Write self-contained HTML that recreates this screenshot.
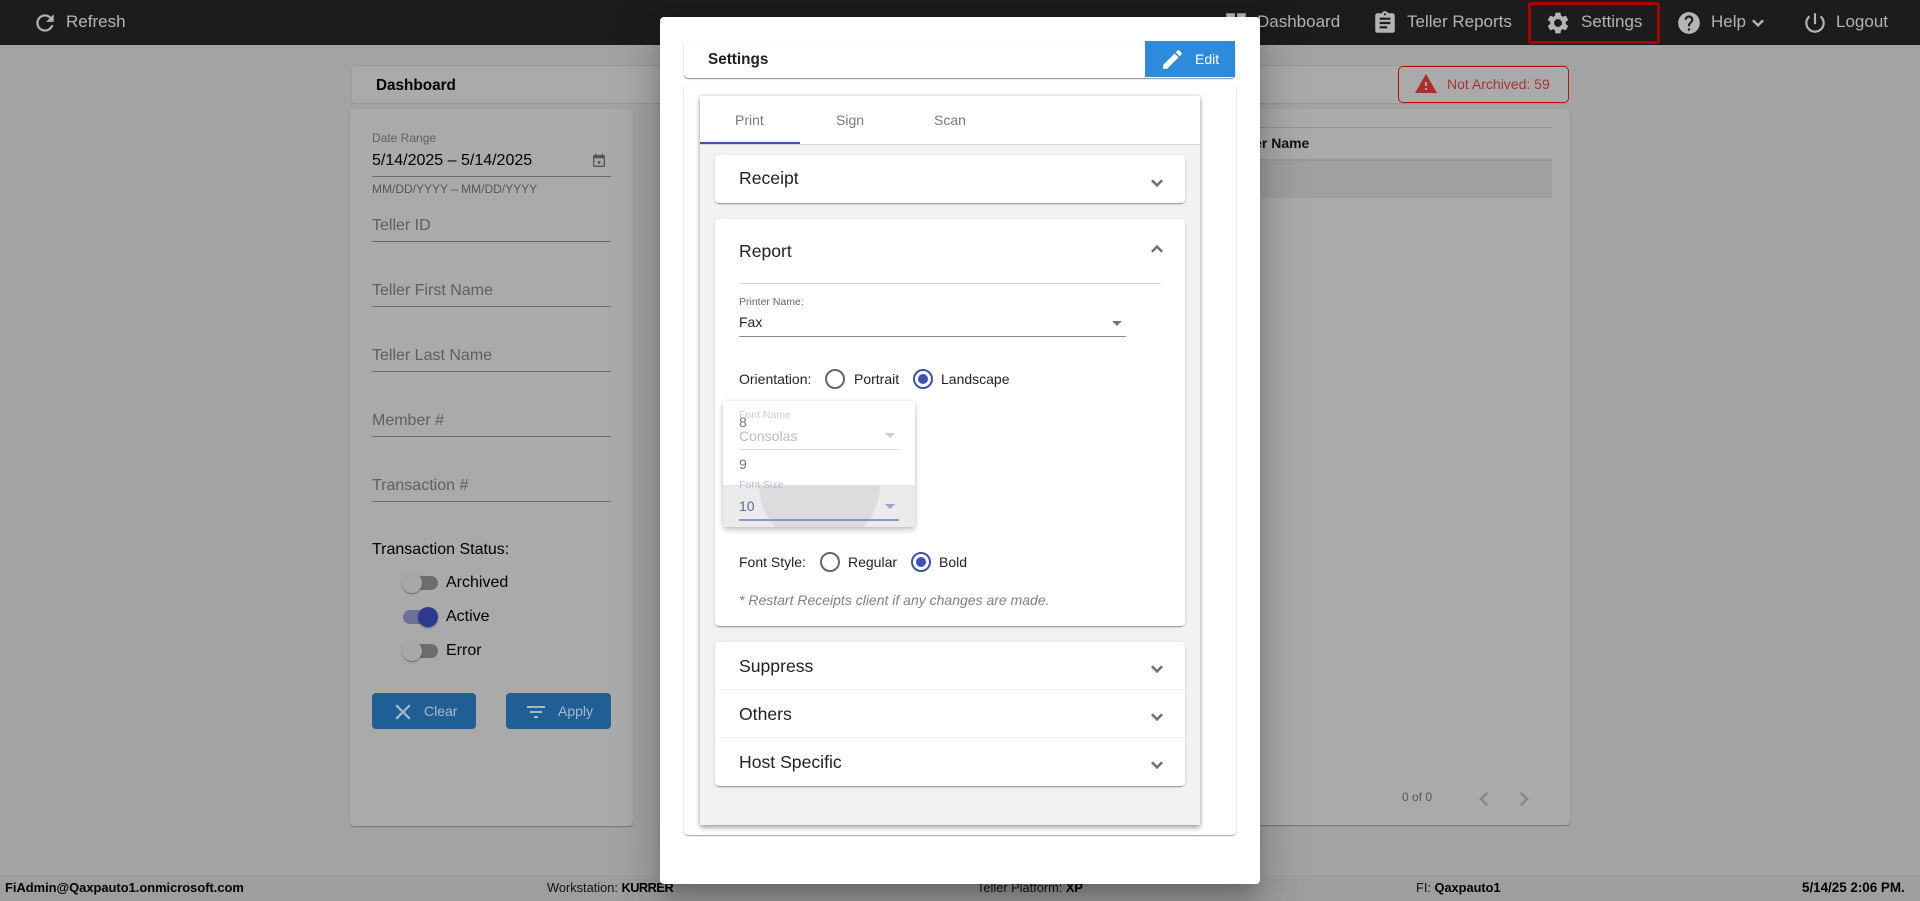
<!DOCTYPE html>
<html lang="en"><head><meta charset="utf-8"><title>Settings</title>
<style>
html,body{margin:0;padding:0;width:1920px;height:901px;overflow:hidden;background:#a3a3a3;font-family:"Liberation Sans",Arial,sans-serif}
.a,.t,svg{position:absolute}
.t{white-space:nowrap;line-height:20px}
svg{display:block}
.line{position:absolute;height:1px;background:#6b6b6b;left:372px;width:239px}
.ph{color:#5f5f5f;font-size:16px;left:372px}
.nav{color:#b4b4b4;font-size:17px}
.track{position:absolute;left:403px;width:35px;height:14px;border-radius:7px;background:#6d6d6d}
.thumb{position:absolute;width:20px;height:20px;border-radius:50%;background:#a8a8a8;box-shadow:0 2px 1px -1px rgba(0,0,0,.2),0 1px 1px rgba(0,0,0,.14),0 1px 3px rgba(0,0,0,.12)}
.lab{font-size:16px;color:#000;left:446px}
.btn{position:absolute;top:693px;height:36px;background:#1f5f96;border-radius:4px;width:104px}
.radio{position:absolute;width:16px;height:16px;border:2px solid #666;border-radius:50%}
.radio.on{border-color:#3f51b5}
.radio.on:after{content:"";position:absolute;left:3px;top:3px;width:10px;height:10px;border-radius:50%;background:#3f51b5}
.s14{font-size:14px;color:#222}
.h{font-size:17.6px;color:#212121;left:739px}
.panel{position:absolute;left:715px;width:470px;background:#fff;border-radius:4px;box-shadow:0 2px 1px -1px rgba(0,0,0,.2),0 1px 1px rgba(0,0,0,.14),0 1px 3px rgba(0,0,0,.12)}
.arrow{position:absolute;width:0;height:0;border-left:5px solid transparent;border-right:5px solid transparent;border-top:5px solid #757575}
.chev{fill:#6e6e6e;stroke:#6e6e6e;stroke-width:.7}
</style></head>
<body>
<!-- header -->
<div class="a" style="left:0;top:0;width:1920px;height:45px;background:#1c1c1c"></div>
<svg style="left:31.5px;top:10px" width="26" height="26" viewBox="0 0 24 24" fill="#b4b4b4"><path d="M17.65 6.35C16.2 4.9 14.21 4 12 4c-4.42 0-7.99 3.58-7.99 8s3.57 8 7.99 8c3.73 0 6.84-2.55 7.73-6h-2.08c-.82 2.33-3.04 4-5.65 4-3.31 0-6-2.69-6-6s2.69-6 6-6c1.66 0 3.14.69 4.22 1.78L13 11h7V4l-2.35 2.35z"/></svg>
<div class="t nav" style="left:66px;top:12px">Refresh</div>
<svg style="left:1222.5px;top:10px" width="26" height="26" viewBox="0 0 24 24" fill="#b4b4b4"><path d="M3 13h8V3H3v10zm0 8h8v-6H3v6zm10 0h8V11h-8v10zm0-18v6h8V3h-8z"/></svg>
<div class="t nav" style="left:1257px;top:12px">Dashboard</div>
<svg style="left:1371.5px;top:10px" width="26" height="26" viewBox="0 0 24 24" fill="#b4b4b4"><path d="M19 3h-4.18C14.4 1.84 13.3 1 12 1c-1.3 0-2.4.84-2.82 2H5c-1.1 0-2 .9-2 2v14c0 1.1.9 2 2 2h14c1.1 0 2-.9 2-2V5c0-1.1-.9-2-2-2zm-7 0c.55 0 1 .45 1 1s-.45 1-1 1-1-.45-1-1 .45-1 1-1zm2 14H7v-2h7v2zm3-4H7v-2h10v2zm0-4H7V7h10v2z"/></svg>
<div class="t nav" style="left:1407px;top:12px">Teller Reports</div>
<div class="a" style="left:1528px;top:2px;width:126px;height:36px;border:3px solid #a80000;border-radius:3px"></div>
<svg style="left:1545px;top:10px" width="26" height="26" viewBox="0 0 24 24" fill="#b4b4b4"><path d="M19.14 12.94c.04-.3.06-.61.06-.94 0-.32-.02-.64-.07-.94l2.03-1.58c.18-.14.23-.41.12-.61l-1.92-3.32c-.12-.22-.37-.29-.59-.22l-2.39.96c-.5-.38-1.03-.7-1.62-.94l-.36-2.54c-.04-.24-.24-.41-.48-.41h-3.84c-.24 0-.43.17-.47.41l-.36 2.54c-.59.24-1.13.57-1.62.94l-2.39-.96c-.22-.08-.47 0-.59.22L2.74 8.87c-.12.21-.08.47.12.61l2.03 1.58c-.05.3-.09.63-.09.94s.02.64.07.94l-2.03 1.58c-.18.14-.23.41-.12.61l1.92 3.32c.12.22.37.29.59.22l2.39-.96c.5.38 1.03.7 1.62.94l.36 2.54c.05.24.24.41.48.41h3.84c.24 0 .44-.17.47-.41l.36-2.54c.59-.24 1.13-.56 1.62-.94l2.39.96c.22.08.47 0 .59-.22l1.92-3.32c.12-.22.07-.47-.12-.61l-2.01-1.58zM12 15.6c-1.98 0-3.6-1.62-3.6-3.6s1.62-3.6 3.6-3.6 3.6 1.62 3.6 3.6-1.62 3.6-3.6 3.6z"/></svg>
<div class="t nav" style="left:1581px;top:12px">Settings</div>
<svg style="left:1676px;top:10px" width="26" height="26" viewBox="0 0 24 24" fill="#b4b4b4"><path d="M12 2C6.48 2 2 6.48 2 12s4.48 10 10 10 10-4.48 10-10S17.52 2 12 2zm1 17h-2v-2h2v2zm2.07-7.75l-.9.92C13.45 12.9 13 13.5 13 15h-2v-.5c0-1.1.45-2.1 1.17-2.83l1.24-1.26c.37-.36.59-.86.59-1.41 0-1.1-.9-2-2-2s-2 .9-2 2H8c0-2.21 1.79-4 4-4s4 1.79 4 4c0 .88-.36 1.68-.93 2.25z"/></svg>
<div class="t nav" style="left:1711px;top:12px">Help</div>
<svg style="left:1747px;top:12px" width="22" height="22" viewBox="0 0 24 24" fill="#b4b4b4" stroke="#b4b4b4" stroke-width=".7"><path d="M16.59 8.59L12 13.17 7.41 8.59 6 10l6 6 6-6z"/></svg>
<svg style="left:1802px;top:10px" width="26" height="26" viewBox="0 0 24 24" fill="#b4b4b4"><path d="M13 3h-2v10h2V3zm4.83 2.17l-1.42 1.42C17.99 7.86 19 9.81 19 12c0 3.87-3.13 7-7 7s-7-3.13-7-7c0-2.19 1.01-4.14 2.58-5.42L6.17 5.17C4.23 6.82 3 9.26 3 12c0 4.97 4.03 9 9 9s9-4.03 9-9c0-2.74-1.23-5.18-3.17-6.83z"/></svg>
<div class="t nav" style="left:1836px;top:12px">Logout</div>

<!-- dashboard bar -->
<div class="a" style="left:351px;top:65px;width:1218px;height:37px;background:#aaa;border-top:1px solid #989898;border-bottom:1px solid #989898;border-left:1px solid #9c9c9c;border-radius:4px"></div>
<div class="t" style="left:376px;top:76px;font-size:15.3px;font-weight:bold;color:#000">Dashboard</div>
<div class="a" style="left:1398px;top:66px;width:169px;height:35px;border:1px solid #b80d0d;border-radius:5px;background:#aaa"></div>
<svg style="left:1414px;top:72px" width="24" height="24" viewBox="0 0 24 24" fill="#ad2d2a"><path d="M1 21h22L12 2 1 21zm12-3h-2v-2h2v2zm0-4h-2v-4h2v4z"/></svg>
<div class="t" style="left:1447px;top:74px;font-size:14px;color:#a83232">Not Archived: 59</div>

<!-- left panel -->
<div class="a" style="left:350px;top:109px;width:283px;height:717px;background:#aaa;border-radius:4px;box-shadow:0 1px 1px rgba(0,0,0,.3)"></div>
<div class="t" style="left:372px;top:128px;font-size:12px;color:#616161">Date Range</div>
<div class="t" style="left:372px;top:151px;font-size:16px;color:#000">5/14/2025 – 5/14/2025</div>
<svg style="left:591px;top:152.5px" width="16" height="16" viewBox="0 0 24 24" fill="#555"><path d="M19 3h-1V1h-2v2H8V1H6v2H5c-1.11 0-1.99.9-1.99 2L3 19c0 1.1.89 2 2 2h14c1.1 0 2-.9 2-2V5c0-1.1-.9-2-2-2zm0 16H5V8h14v11zM10 12h4v4h-4z"/></svg>
<div class="line" style="top:176px"></div>
<div class="t" style="left:372px;top:179px;font-size:12px;color:#555">MM/DD/YYYY – MM/DD/YYYY</div>
<div class="t ph" style="top:216px">Teller ID</div><div class="line" style="top:241px"></div>
<div class="t ph" style="top:281px">Teller First Name</div><div class="line" style="top:306px"></div>
<div class="t ph" style="top:346px">Teller Last Name</div><div class="line" style="top:371px"></div>
<div class="t ph" style="top:411px">Member #</div><div class="line" style="top:436px"></div>
<div class="t ph" style="top:476px">Transaction #</div><div class="line" style="top:501px"></div>
<div class="t" style="left:372px;top:540px;font-size:16px;color:#000">Transaction Status:</div>
<div class="track" style="top:576px"></div><div class="thumb" style="left:402px;top:573px"></div>
<div class="t lab" style="top:573px">Archived</div>
<div class="track" style="top:610px;background:#6c7199"></div><div class="thumb" style="left:418px;top:607px;background:#2c3a8c"></div>
<div class="t lab" style="top:607px">Active</div>
<div class="track" style="top:644px"></div><div class="thumb" style="left:402px;top:641px"></div>
<div class="t lab" style="top:641px">Error</div>
<div class="btn" style="left:372px"></div>
<svg style="left:389.5px;top:699px" width="26" height="26" viewBox="0 0 24 24" fill="#a9bac8"><path d="M19 6.41L17.59 5 12 10.59 6.41 5 5 6.41 10.59 12 5 17.59 6.41 19 12 13.41 17.59 19 19 17.59 13.41 12z"/></svg>
<div class="t" style="left:424px;top:701px;font-size:14px;color:#a9bac8">Clear</div>
<div class="btn" style="left:506px;width:105px"></div>
<svg style="left:524px;top:700px" width="24" height="24" viewBox="0 0 24 24" fill="#a9bac8"><path d="M10 18h4v-2h-4v2zM3 6v2h18V6H3zm3 7h12v-2H6v2z"/></svg>
<div class="t" style="left:558px;top:701px;font-size:14px;color:#a9bac8">Apply</div>

<!-- right panel -->
<div class="a" style="left:660px;top:109px;width:910px;height:716px;background:#aaa;border-radius:4px;box-shadow:0 1px 1px rgba(0,0,0,.3)"></div>
<div class="a" style="left:660px;top:127px;width:892px;height:1px;background:#939393"></div>
<div class="t" style="left:1231px;top:133px;font-size:14px;font-weight:bold;color:#111">Teller Name</div>
<div class="a" style="left:660px;top:159px;width:892px;height:2px;background:#969aa0"></div>
<div class="a" style="left:660px;top:161px;width:892px;height:37px;background:#a0a0a0"></div>
<div class="t" style="left:1402px;top:787px;font-size:12px;color:#555">0 of 0</div>
<svg style="left:1470px;top:785px" width="28" height="28" viewBox="0 0 24 24" fill="#868686"><path d="M15.41 7.41L14 6l-6 6 6 6 1.41-1.41L10.83 12z"/></svg>
<svg style="left:1510px;top:785px" width="28" height="28" viewBox="0 0 24 24" fill="#868686"><path d="M10 6L8.59 7.41 13.17 12l-4.58 4.59L10 18l6-6z"/></svg>

<!-- footer -->
<div class="a" style="left:0;top:875px;width:1920px;height:26px;background:#9d9e9f"></div>
<div class="t" style="left:5px;top:878px;font-size:12.9px;font-weight:bold;color:#000">FiAdmin@Qaxpauto1.onmicrosoft.com</div>
<div class="t" style="left:547px;top:878px;font-size:12.8px;color:#111">Workstation: <b style="color:#000;letter-spacing:-.5px">KURRER</b></div>
<div class="t" style="left:977px;top:878px;font-size:12.8px;color:#111">Teller Platform: <b style="color:#000">XP</b></div>
<div class="t" style="left:1416px;top:878px;font-size:12.8px;color:#111">FI: <b style="color:#000">Qaxpauto1</b></div>
<div class="t" style="left:1802px;top:878px;font-size:13.4px;font-weight:bold;color:#000">5/14/25 2:06 PM.</div>

<!-- modal -->
<div class="a" style="left:660px;top:17px;width:600px;height:867px;background:#fff;border-radius:4px;box-shadow:0 11px 15px -7px rgba(0,0,0,.2),0 24px 38px 3px rgba(0,0,0,.14),0 9px 46px 8px rgba(0,0,0,.12)"></div>
<div class="a" style="left:684px;top:41px;width:551px;height:37px;background:#fff;border-radius:4px;box-shadow:0 1px 1px rgba(0,0,0,.45),0 0 2px rgba(0,0,0,.06)"></div>
<div class="t" style="left:708px;top:50px;font-size:15.3px;font-weight:bold;color:#212121">Settings</div>
<div class="a" style="left:1145px;top:41px;width:90px;height:36px;background:#2e8bdc"></div>
<svg style="left:1160px;top:47px" width="25" height="25" viewBox="0 0 24 24" fill="#fff"><path d="M3 17.25V21h3.75L17.81 9.94l-3.75-3.75L3 17.25zM20.71 7.04c.39-.39.39-1.02 0-1.41l-2.34-2.34c-.39-.39-1.02-.39-1.41 0l-1.83 1.83 3.75 3.75 1.83-1.83z"/></svg>
<div class="t" style="left:1195px;top:49px;font-size:14px;color:#fff">Edit</div>

<div class="a" style="left:684px;top:86px;width:552px;height:749px;background:#fff;border-radius:4px;box-shadow:0 1px 1px rgba(0,0,0,.35),0 0 2px rgba(0,0,0,.08)"></div>
<div class="a" style="left:700px;top:96px;width:500px;height:729px;background:#f2f2f2;box-shadow:0 3px 5px rgba(0,0,0,.3),0 0 4px rgba(0,0,0,.18)"></div>
<div class="a" style="left:700px;top:96px;width:500px;height:48px;background:#fff;border-bottom:1px solid #d8d8d8"></div>
<div class="a" style="left:700px;top:142px;width:100px;height:2px;background:#3f51b5"></div>
<div class="t" style="left:735px;top:110px;font-size:14px;color:#7a7a7a">Print</div>
<div class="t" style="left:836px;top:110px;font-size:14px;color:#7a7a7a">Sign</div>
<div class="t" style="left:934px;top:110px;font-size:14px;color:#7a7a7a">Scan</div>

<div class="panel" style="top:155px;height:48px"></div>
<div class="t h" style="top:168px">Receipt</div>
<svg class="chev" style="left:1146px;top:172px" width="22" height="22" viewBox="0 0 24 24"><path d="M16.59 8.59L12 13.17 7.41 8.59 6 10l6 6 6-6z"/></svg>

<div class="panel" style="top:219px;height:407px"></div>
<div class="t h" style="top:241px">Report</div>
<svg class="chev" style="left:1146px;top:238px" width="22" height="22" viewBox="0 0 24 24"><path d="M12 8l-6 6 1.41 1.41L12 10.83l4.59 4.58L18 14z"/></svg>
<div class="a" style="left:739px;top:283px;width:422px;height:1px;background:#dcdcdc"></div>
<div class="t" style="left:739px;top:292px;font-size:10.5px;color:#666">Printer Name:</div>
<div class="t s14" style="left:739px;top:312px">Fax</div>
<div class="arrow" style="left:1112px;top:321px"></div>
<div class="a" style="left:739px;top:336px;width:387px;height:1px;background:#8a8a8a"></div>

<div class="t s14" style="left:739px;top:369px">Orientation:</div>
<div class="radio" style="left:825px;top:369px"></div>
<div class="t s14" style="left:854px;top:369px">Portrait</div>
<div class="radio on" style="left:913px;top:369px"></div>
<div class="t s14" style="left:941px;top:369px">Landscape</div>

<div class="a" style="left:723px;top:401px;width:192px;height:126px;background:#fff;box-shadow:0 3px 6px rgba(0,0,0,.22),0 0 3px rgba(0,0,0,.1);border-radius:3px;overflow:hidden">
  <div class="a" style="left:0;top:84px;width:192px;height:42px;background:#ebebeb"></div>
  <div class="a" style="left:36px;top:24px;width:121px;height:121px;border-radius:50%;background:#dcdcdc;clip-path:inset(60px 0 0 0)"></div>
  <div class="t" style="left:16px;top:4px;font-size:10.5px;color:#ccc">Font Name</div>
  <div class="t" style="left:16px;top:11px;font-size:14px;color:#777">8</div>
  <div class="t" style="left:16px;top:25px;font-size:14px;color:#bbb">Consolas</div>
  <div class="arrow" style="left:162px;top:32px;border-top-color:#ccc"></div>
  <div class="a" style="left:16px;top:48px;width:160px;height:1px;background:#ddd"></div>
  <div class="t" style="left:16px;top:53px;font-size:14px;color:#777">9</div>
  <div class="t" style="left:16px;top:74px;font-size:10.5px;color:#b4bbdf">Font Size</div>
  <div class="t" style="left:16px;top:95px;font-size:14px;color:#5a679f">10</div>
  <div class="arrow" style="left:162px;top:103px;border-top-color:#9aa3d8"></div>
  <div class="a" style="left:16px;top:118px;width:160px;height:2px;background:#8a94cf"></div>
</div>

<div class="t s14" style="left:739px;top:552px">Font Style:</div>
<div class="radio" style="left:820px;top:552px"></div>
<div class="t s14" style="left:848px;top:552px">Regular</div>
<div class="radio on" style="left:911px;top:552px"></div>
<div class="t s14" style="left:939px;top:552px">Bold</div>
<div class="t" style="left:739px;top:590px;font-size:14px;font-style:italic;color:#808080">* Restart Receipts client if any changes are made.</div>

<div class="panel" style="top:642px;height:144px"></div>
<div class="a" style="left:715px;top:689px;width:470px;height:1px;background:#f5f5f5"></div>
<div class="a" style="left:715px;top:737px;width:470px;height:1px;background:#f5f5f5"></div>
<div class="t h" style="top:656px">Suppress</div>
<svg class="chev" style="left:1146px;top:658px" width="22" height="22" viewBox="0 0 24 24"><path d="M16.59 8.59L12 13.17 7.41 8.59 6 10l6 6 6-6z"/></svg>
<div class="t h" style="top:704px">Others</div>
<svg class="chev" style="left:1146px;top:706px" width="22" height="22" viewBox="0 0 24 24"><path d="M16.59 8.59L12 13.17 7.41 8.59 6 10l6 6 6-6z"/></svg>
<div class="t h" style="top:752px">Host Specific</div>
<svg class="chev" style="left:1146px;top:754px" width="22" height="22" viewBox="0 0 24 24"><path d="M16.59 8.59L12 13.17 7.41 8.59 6 10l6 6 6-6z"/></svg>
</body></html>
